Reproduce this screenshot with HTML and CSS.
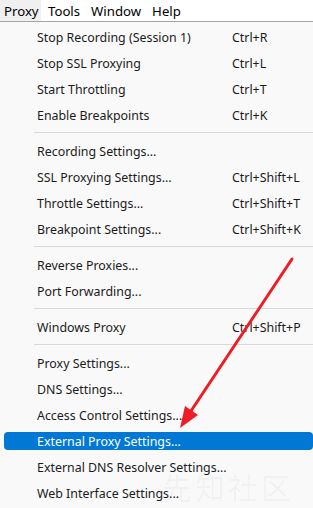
FILE: index.html
```html
<!DOCTYPE html>
<html>
<head>
<meta charset="utf-8">
<link rel="stylesheet" href="styles.css">
</head>
<body>
<div class="menubar">
  <div class="mb-item open">Proxy</div>
  <div class="mb-item">Tools</div>
  <div class="mb-item">Window</div>
  <div class="mb-item">Help</div>
</div>
<div class="menu">
  <div class="item"><span class="label">Stop Recording (Session 1)</span><span class="key">Ctrl+R</span></div>
  <div class="item"><span class="label">Stop SSL Proxying</span><span class="key">Ctrl+L</span></div>
  <div class="item"><span class="label">Start Throttling</span><span class="key">Ctrl+T</span></div>
  <div class="item"><span class="label">Enable Breakpoints</span><span class="key">Ctrl+K</span></div>
  <div class="sep"></div>
  <div class="item"><span class="label">Recording Settings...</span></div>
  <div class="item"><span class="label">SSL Proxying Settings...</span><span class="key">Ctrl+Shift+L</span></div>
  <div class="item"><span class="label">Throttle Settings...</span><span class="key">Ctrl+Shift+T</span></div>
  <div class="item"><span class="label">Breakpoint Settings...</span><span class="key">Ctrl+Shift+K</span></div>
  <div class="sep"></div>
  <div class="item"><span class="label">Reverse Proxies...</span></div>
  <div class="item"><span class="label">Port Forwarding...</span></div>
  <div class="sep"></div>
  <div class="item"><span class="label">Windows Proxy</span><span class="key">Ctrl+Shift+P</span></div>
  <div class="sep"></div>
  <div class="item"><span class="label">Proxy Settings...</span></div>
  <div class="item"><span class="label">DNS Settings...</span></div>
  <div class="item"><span class="label">Access Control Settings...</span></div>
  <div class="item active"><span class="label">External Proxy Settings...</span></div>
  <div class="item"><span class="label">External DNS Resolver Settings...</span></div>
  <div class="item"><span class="label">Web Interface Settings...</span></div>
</div>
<div class="watermark">先知社区</div>
<svg class="arrow" width="313" height="508" viewBox="0 0 313 508">
  <line x1="292" y1="259" x2="189" y2="414" stroke="#ee1c25" stroke-width="3" stroke-linecap="round"/>
  <polygon points="180,428 185,406 198,415" fill="#ee1c25"/>
</svg>
</body>
</html>
```
FILE: styles.css
```css
html, body {
  margin: 0;
  padding: 0;
}
body {
  width: 313px;
  height: 508px;
  overflow: hidden;
  background: #f9f9f9;
  font-family: "Noto Sans", "Noto Sans CJK SC", sans-serif;
  font-size: 12.4px;
  color: #1b1b1b;
  position: relative;
}
.menubar {
  height: 21px;
  background: #ffffff;
  border-bottom: 1px solid #a6a6a6;
  display: flex;
  align-items: stretch;
}
.mb-item {
  display: flex;
  align-items: center;
  padding: 0 4px;
  margin-right: 3px;
  font-size: 13.2px;
  color: #000;
}
.mb-item.open {
  background: #f0f0f0;
  width: 33px;
}
.menu {
  padding-top: 2px;
  display: flex;
  flex-direction: column;
}
.item {
  height: 26px;
  display: flex;
  align-items: center;
  padding-left: 37px;
}
.label {
  width: 195px;
  white-space: nowrap;
}
.key {
  white-space: nowrap;
}
.item.active {
  height: 18px;
  margin: 4px 0 4px 4px;
  padding-left: 33px;
  border-radius: 4px;
  background: #0078d4;
  color: #ffffff;
}
.sep {
  height: 1px;
  margin: 4px 0 5px 34px;
  background: #d9d9d9;
}
.watermark {
  position: absolute;
  left: 162px;
  top: 470px;
  font-family: "Noto Sans CJK SC", sans-serif;
  font-size: 30px;
  line-height: 32px;
  letter-spacing: 3px;
  color: rgba(0, 0, 0, 0.035);
}
.arrow {
  position: absolute;
  left: 0;
  top: 0;
}
```
